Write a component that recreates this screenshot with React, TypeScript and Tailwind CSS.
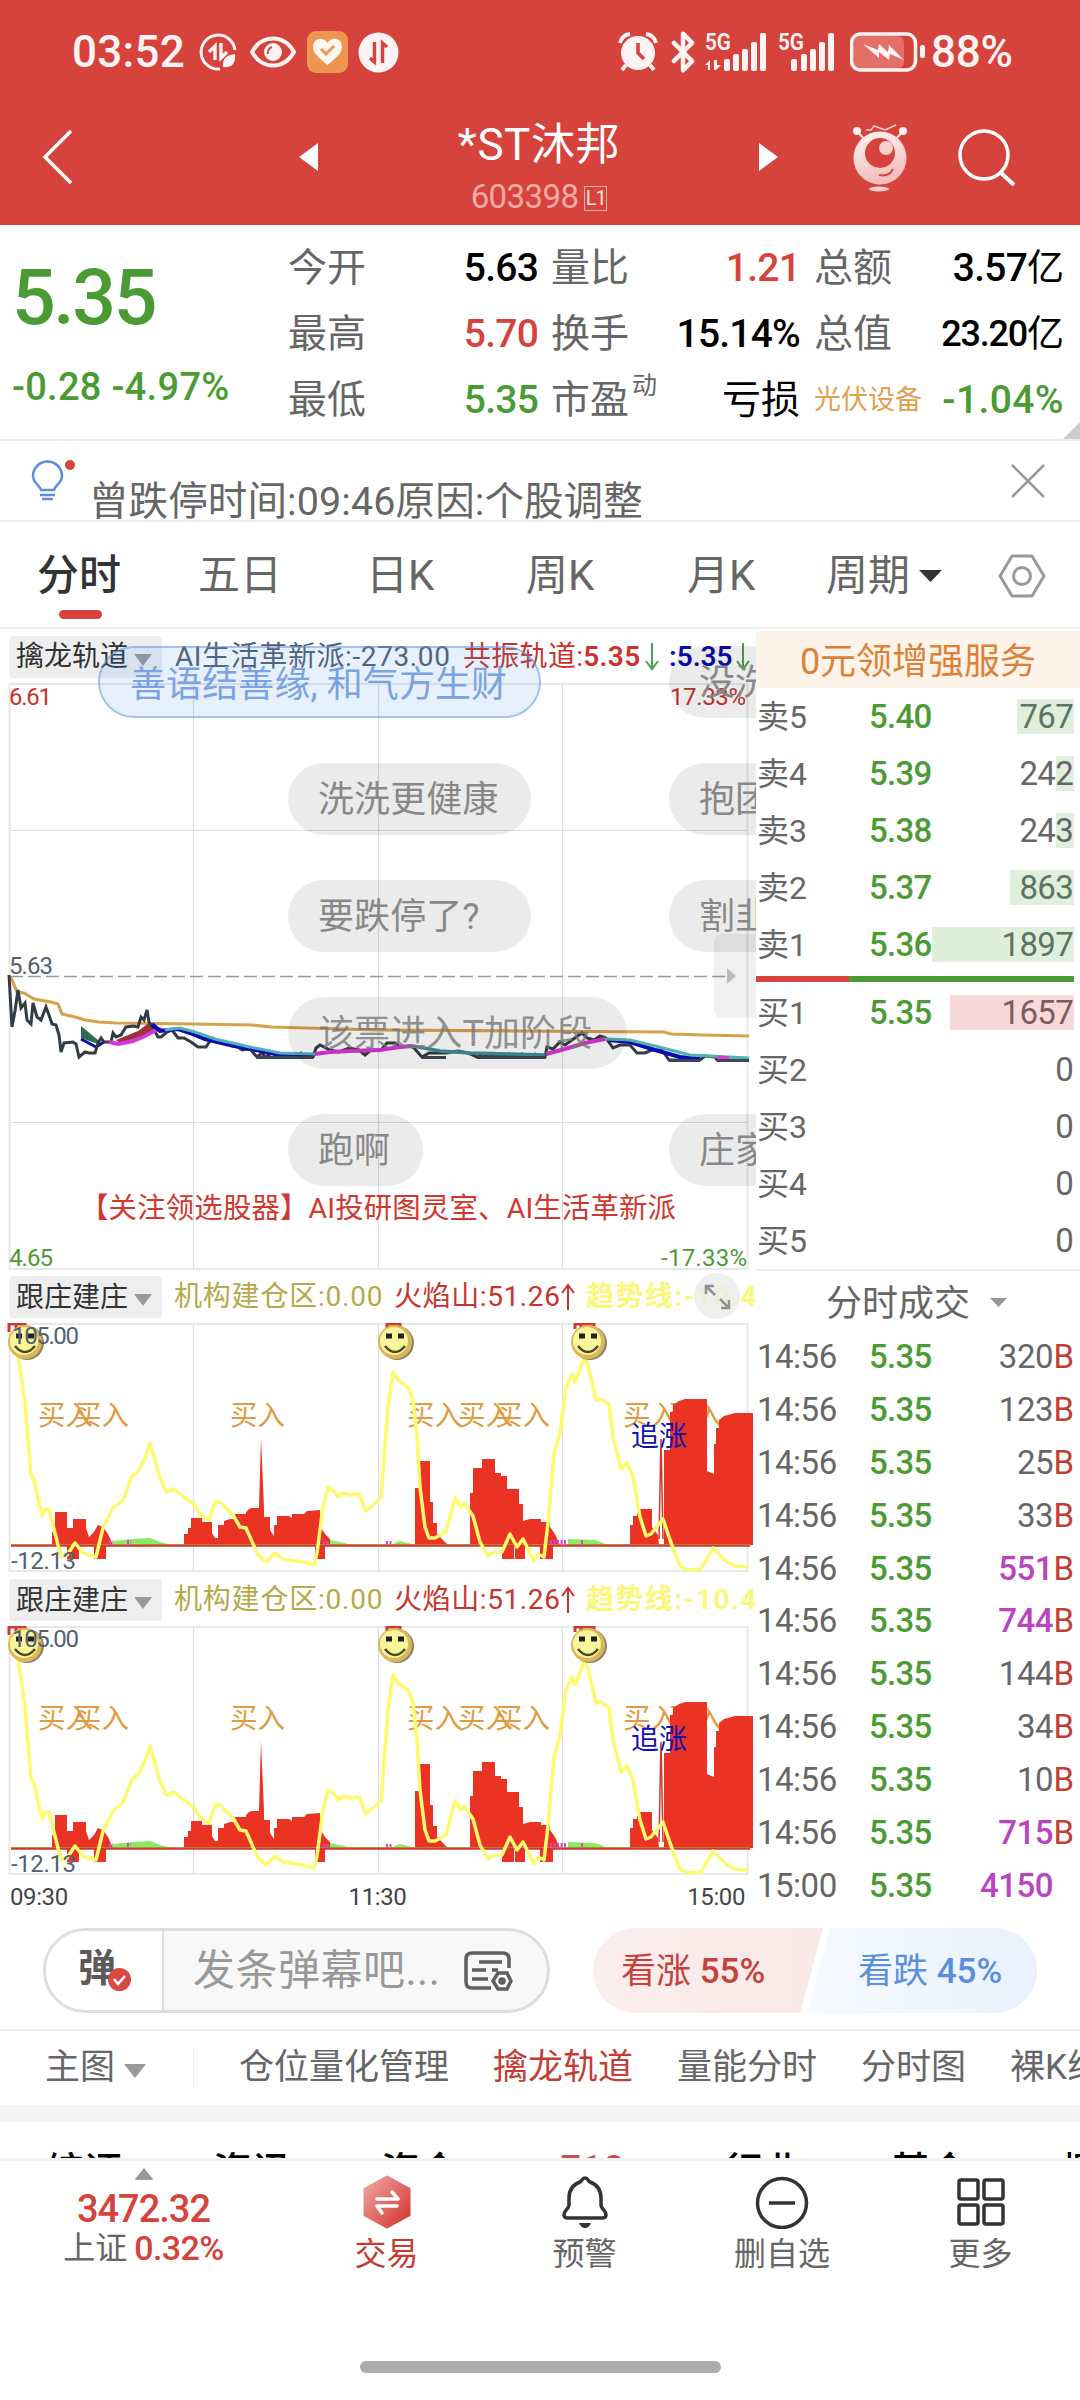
import React from 'react'
import { Bluetooth } from 'lucide-react'

const quoteRows = [
  [
    { label: '今开', value: '5.63', color: 'text-black' },
    { label: '量比', value: '1.21', color: 'text-[#d5433c]' },
    { label: '总额', value: '3.57', unit: '亿', color: 'text-black' }
  ],
  [
    { label: '最高', value: '5.70', color: 'text-[#d5433c]' },
    { label: '换手', value: '15.14%', color: 'text-black' },
    { label: '总值', value: '23.20', unit: '亿', color: 'text-black' }
  ],
  [
    { label: '最低', value: '5.35', color: 'text-[#4b9b35]' },
    { label: '市盈', sup: '动', value: '', unit: '亏损', color: 'text-black' },
    { label: '光伏设备', value: '-1.04%', color: 'text-[#4b9b35]' }
  ]
]

const sells = [
  { name: '卖5', price: '5.40', qty: '767', bar: 57 },
  { name: '卖4', price: '5.39', qty: '242', bar: 18 },
  { name: '卖3', price: '5.38', qty: '243', bar: 18 },
  { name: '卖2', price: '5.37', qty: '863', bar: 64 },
  { name: '卖1', price: '5.36', qty: '1897', bar: 142 }
]

const buys = [
  { name: '买1', price: '5.35', qty: '1657', bar: 124 },
  { name: '买2', price: '', qty: '0', bar: 0 },
  { name: '买3', price: '', qty: '0', bar: 0 },
  { name: '买4', price: '', qty: '0', bar: 0 },
  { name: '买5', price: '', qty: '0', bar: 0 }
]

const trades = [
  { time: '14:56', qty: '320', side: 'B' },
  { time: '14:56', qty: '123', side: 'B' },
  { time: '14:56', qty: '25', side: 'B' },
  { time: '14:56', qty: '33', side: 'B' },
  { time: '14:56', qty: '551', side: 'B' },
  { time: '14:56', qty: '744', side: 'B' },
  { time: '14:56', qty: '144', side: 'B' },
  { time: '14:56', qty: '34', side: 'B' },
  { time: '14:56', qty: '10', side: 'B' },
  { time: '14:56', qty: '715', side: 'B' },
  { time: '15:00', qty: '4150', side: '' }
]

// 分时价格线
const pricePoints =
  '9,292 12,344 15,328 18,307 21,325 25,320 27,337 31,341 33,320 37,334 41,337 46,324 50,335 52,341 56,342 59,352 61,369 64,360 73,359 76,361 79,374 85,369 89,370 95,370 98,360 101,355 104,359 111,359 113,350 116,354 121,352 126,344 133,343 138,344 141,334 144,337 147,327 149,339 153,345 158,354 161,354 167,349 172,347 178,355 184,355 191,359 198,364 206,364 212,355 218,359 225,359 232,363 238,364 242,367 250,366 257,374 262,370 265,374 272,370 279,374 286,372 293,374 301,370 305,374 313,374 316,365 320,362 330,367 339,369 349,365 359,367 365,372 371,367 381,367 387,360 395,360 400,364 410,363 414,365 422,374 429,370 446,370 458,368 468,370 477,374 483,371 490,374 496,371 503,374 509,371 516,374 522,371 529,374 535,371 545,374 547,364 553,366 560,359 565,362 572,357 582,350 587,355 594,357 600,353 606,355 613,365 620,362 630,362 637,370 645,370 652,367 662,367 669,377 700,377 705,373 715,374 717,377 749,377'

const avgPoints =
  '10,294 12,297 17,309 24,310 34,316 51,319 58,321 62,331 75,334 85,337 99,339 116,340 194,341 252,342 271,344 378,347 514,348 664,349 671,351 703,352 749,353'

const trendPoints =
  '18,32 25,80 31,152 34,157 42,193 45,186 49,186 53,202 61,234 67,232 75,220 83,230 96,234 103,205 113,185 123,177 132,153 138,149 145,135 150,120 153,130 160,155 166,169 174,166 185,175 193,180 200,192 209,197 215,179 220,179 233,192 240,204 246,205 258,232 266,239 275,230 283,236 303,239 314,242 317,230 323,184 328,164 335,169 338,174 344,170 350,172 359,171 366,188 381,175 388,84 393,49 398,57 408,64 413,77 417,114 420,164 425,204 429,215 435,215 446,209 455,175 461,184 464,180 473,193 480,219 488,233 492,230 502,229 510,211 517,224 523,216 534,238 538,231 544,234 548,200 554,130 560,110 566,64 572,51 575,59 584,36 587,38 596,77 600,76 609,81 613,114 621,146 627,140 633,154 640,194 646,213 651,211 663,196 670,217 680,243 688,247 701,246 713,225 727,239 735,243 748,244'

const flames = [
  '52,222 52,209 55,209 55,189 67,189 67,205 73,205 73,196 86,196 86,205 89,214 94,209 98,202 103,204 108,211 113,222',
  '184,222 184,211 188,211 188,205 191,205 191,195 202,195 202,199 212,199 212,210 215,215 218,215 218,202 224,202 224,198 230,196 235,196 235,191 246,191 246,189 249,186 252,185 259,185 261,115 264,185 264,194 270,194 270,207 274,213 274,202 277,202 277,193 289,193 292,195 292,191 304,191 307,188 320,187 320,203 325,211 330,216 331,222',
  '415,222 415,165 419,165 419,138 430,138 430,179 433,179 433,200 437,200 437,211 442,216 448,222',
  '470,222 470,170 473,170 473,145 482,145 482,136 495,136 495,150 501,150 501,153 507,153 507,166 519,166 519,181 523,181 523,198 530,196 541,196 541,199 550,199 550,204 555,211 560,222',
  '630,222 630,202 633,202 633,193 637,193 637,190 640,190 640,186 652,186 652,204 658,212 659,222',
  '664,222 664,127 670,127 670,89 673,89 673,82 679,78 685,76 707,76 707,148 714,151 714,121 716,121 716,105 719,105 719,97 724,93 735,90 753,90 753,222'
]

const buyMarks = [38, 74, 230, 407, 458, 495, 623, 668]

function StatusBar() {
  return (
    <div className="h-[104px] shrink-0 flex items-center justify-between pl-[72px] pr-[65px] text-[#fff3f3]">
      <div className="flex items-center">
        <span className="w-[126px] text-[44px] font-medium leading-none tracking-[0.3px]">03:52</span>
        <svg className="w-[40px] h-[40px]" viewBox="0 0 40 40" fill="none" stroke="currentColor" strokeWidth="3">
          <path d="M37 18A17 17 0 1 0 22 37" />
          <path d="M11 20L17 14V28M23 11V26L29 20" strokeWidth="3.4" />
          <path d="M25 35C24 27 28 23 37 22C38 31 34 36 25 35Z" fill="currentColor" stroke="none" />
        </svg>
        <svg className="ml-[12px] w-[46px] h-[40px]" viewBox="0 0 46 40" fill="none" stroke="currentColor" strokeWidth="4">
          <path d="M2 20C12 2 34 2 44 20C34 38 12 38 2 20Z" />
          <circle cx="23" cy="20" r="9" fill="currentColor" stroke="none" />
          <path d="M18 22A6 6 0 0 1 22 15" stroke="#d5433c" strokeWidth="2" />
        </svg>
        <svg className="ml-[11px] w-[41px] h-[42px]" viewBox="0 0 41 42">
          <rect width="41" height="42" rx="9" fill="#ec9652" />
          <path d="M20.500 34C11 26 6 22 6 16C6 7 16 5 20.500 12C25 5 35 7 35 16C35 22 30 26 20.500 34Z" fill="#fff6ee" />
          <path d="M14 18L19 23L27 15" stroke="#ec9652" strokeWidth="3" fill="none" />
        </svg>
        <svg className="ml-[10px] w-[41px] h-[41px]" viewBox="0 0 41 41">
          <circle cx="20.500" cy="20.500" r="20" fill="currentColor" />
          <path d="M16.500 10V30L12 26M24.500 31V11L29 15" stroke="#d5433c" strokeWidth="3.400" fill="none" />
        </svg>
      </div>
      <div className="flex items-center">
        <svg className="w-[40px] h-[40px]" viewBox="0 0 40 40">
          <circle cx="20" cy="21" r="17" fill="currentColor" />
          <path d="M2 11Q4 3 12 2M38 11Q36 3 28 2M8 33L4 38M32 33L36 38" stroke="currentColor" strokeWidth="4" fill="none" />
          <path d="M20 11V21L26 27" stroke="#d5433c" strokeWidth="3.500" fill="none" />
        </svg>
        <Bluetooth className="ml-[3px] w-[44px] h-[44px]" strokeWidth={2.4} />
        <svg className="w-[64px] h-[40px] overflow-visible" viewBox="0 0 64 40" fill="currentColor">
          <text x="0" y="18" fontSize="23" fontWeight="600" textLength="26" lengthAdjust="spacingAndGlyphs">5G</text>
          <path d="M0 33L5 28V38H3V33ZM9 28H12V33L16 33L11 38H9Z" />
          <rect x="19" y="27" width="6" height="12" rx="2" />
          <rect x="28" y="22" width="6" height="17" rx="2" />
          <rect x="37" y="17" width="6" height="22" rx="2" />
          <rect x="46" y="10" width="6" height="29" rx="2" />
          <rect x="55" y="1" width="6" height="38" rx="2" />
        </svg>
        <svg className="ml-[9px] w-[60px] h-[40px] overflow-visible" viewBox="0 0 60 40" fill="currentColor">
          <text x="0" y="18" fontSize="23" fontWeight="600" textLength="26" lengthAdjust="spacingAndGlyphs">5G</text>
          <rect x="13" y="27" width="6" height="12" rx="2" />
          <rect x="23" y="22" width="6" height="17" rx="2" />
          <rect x="32" y="17" width="6" height="22" rx="2" />
          <rect x="41" y="10" width="6" height="29" rx="2" />
          <rect x="50" y="1" width="6" height="38" rx="2" />
        </svg>
        <svg className="ml-[12px] w-[76px] h-[40px]" viewBox="0 0 76 40" fill="none">
          <rect x="3" y="4" width="51" height="33" rx="7" fill="#e27068" />
          <rect x="1.500" y="2" width="64" height="36" rx="9" stroke="currentColor" strokeWidth="3.500" />
          <path d="M13 12L29 26L29 20L39 28L40 22L54 28L39 13L38 20L29 12L28 18Z" fill="currentColor" />
          <rect x="70" y="13" width="5" height="13" rx="2" fill="currentColor" />
        </svg>
        <span className="ml-[5px] w-[84px] text-[44px] font-medium leading-none tracking-[-0.2px]">88%</span>
      </div>
    </div>
  )
}

function TitleBar() {
  return (
    <div className="h-[121px] shrink-0 flex pl-[42px] pr-[63px] text-white">
      <svg className="mt-[25px] w-[32px] h-[56px]" viewBox="0 0 32 56" fill="none" stroke="white" strokeWidth="3.500">
        <path d="M29 2L3 28L29 54" />
      </svg>
      <svg className="mt-[39px] ml-[225px] w-[19px] h-[28px]" viewBox="0 0 19 28" fill="white">
        <path d="M0 14L19 0V28Z" />
      </svg>
      <div className="ml-[100px] w-[242px] flex flex-col items-center">
        <div className="mt-[18px] text-[44px] leading-[46px] tracking-[0.6px] whitespace-nowrap">*ST沐邦</div>
        <div className="mt-[13px] flex items-center gap-[6px] text-[#f4aaa6]">
          <span className="text-[33px] leading-[32px] tracking-[-0.6px]">603398</span>
          <span className="mt-[3px] w-[23px] h-[25px] border border-[#f4aaa6] text-[20px] leading-[23px] text-center text-[#fce0de] tracking-[-1px]">L1</span>
        </div>
      </div>
      <svg className="mt-[39px] ml-[99px] w-[19px] h-[28px]" viewBox="0 0 19 28" fill="white">
        <path d="M19 14L0 0V28Z" />
      </svg>
      <svg className="mt-[20px] ml-[74px] w-[56px] h-[68px]" viewBox="0 0 56 68">
        <defs>
          <linearGradient id="mascot" x1="0" y1="0" x2="0.3" y2="1">
            <stop offset="0" stopColor="#fff6f5" />
            <stop offset="1" stopColor="#f3bdbb" />
          </linearGradient>
        </defs>
        <path d="M14 6L19 6L22 2L33 6L44 1" stroke="#f9d0ce" strokeWidth="1.500" fill="none" />
        <path d="M5 7L12 15M51 7L44 15" stroke="#fbe3e2" strokeWidth="2" />
        <circle cx="5" cy="7" r="4" fill="#fff0ef" />
        <circle cx="51" cy="7" r="4" fill="#fff0ef" />
        <circle cx="28" cy="34" r="26.500" fill="url(#mascot)" />
        <circle cx="28" cy="29" r="15" fill="#d5433c" />
        <circle cx="34" cy="24" r="7" fill="#f8cfcd" />
        <path d="M27 51Q37 53 41 45" stroke="#d5433c" strokeWidth="2" fill="none" />
        <ellipse cx="27" cy="65" rx="10" ry="2.500" fill="#f8cfcd" />
      </svg>
      <svg className="mt-[24px] ml-[50px] w-[58px] h-[58px]" viewBox="0 0 58 58" fill="none" stroke="white" strokeWidth="3.500">
        <circle cx="26" cy="27" r="24" />
        <path d="M42 44L56 57" strokeWidth="4" />
      </svg>
    </div>
  )
}

function Quote() {
  return (
    <div className="relative h-[216px] shrink-0 flex border-b-2 border-[#eeeeee]">
      <div className="w-[288px] pl-[12px] text-[#4b9b35]">
        <div className="mt-[33px] text-[77px] leading-[80px] font-medium tracking-[-2.4px]">5.35</div>
        <div className="mt-[29px] text-[38px] leading-[40px] font-medium tracking-[0.3px] whitespace-nowrap">-0.28 -4.97%</div>
      </div>
      <div className="flex flex-col pt-[10px]">
        {quoteRows.map((row, i) => (
          <div key={i} className="flex h-[66px] items-center leading-none text-[39px]">
            {row.map((cell, j) => (
              <div key={j} className={`flex items-center justify-between whitespace-nowrap ${j === 0 ? 'w-[250px] mr-[13px]' : j === 1 ? 'w-[249px] mr-[14px]' : 'w-[250px]'}`}>
                {cell.label === '光伏设备' ? (
                  <span className="text-[27px] text-[#e39f50]">{cell.label}</span>
                ) : (
                  <span className="flex text-[#666666]">
                    {cell.label}
                    {cell.sup && <span className="-mt-[8px] ml-[3px] text-[25px]">{cell.sup}</span>}
                  </span>
                )}
                <span className={`flex items-center ${cell.color}`}>
                  <span className={`font-medium ${cell.value === '23.20' ? 'text-[36px] tracking-[-1.2px]' : cell.value === '-1.04%' ? 'tracking-[0.4px]' : 'tracking-[-0.8px]'}`}>
                    {cell.value}
                  </span>
                  {cell.unit && <span className={i === 2 ? '' : 'text-[37px]'}>{cell.unit}</span>}
                </span>
              </div>
            ))}
          </div>
        ))}
      </div>
      <svg className="absolute right-0 bottom-0 w-[17px] h-[17px]" viewBox="0 0 17 17">
        <path d="M17 0V17H0Z" fill="#cccccc" />
      </svg>
    </div>
  )
}

function Hint() {
  return (
    <div className="h-[81px] shrink-0 flex overflow-hidden border-b-2 border-[#eeeeee] pl-[31px] pr-[34px]">
      <svg className="mt-[18px] w-[46px] h-[42px]" viewBox="0 0 46 42" fill="none" stroke="#5b8fdd" strokeWidth="2.500">
        <path d="M10 31C9 26 2 24 2 17A14.500 14.500 0 0 1 31 17C31 24 24 26 23 31Z" />
        <path d="M9 36H24M11 40H22" />
        <circle cx="39" cy="6" r="5" fill="#d5433c" stroke="none" />
      </svg>
      <div className="ml-[12px] mt-[41px] text-[39.500px] leading-[40px] text-[#666666] tracking-[0.1px] whitespace-nowrap">曾跌停时间:09:46原因:个股调整</div>
      <svg className="ml-auto mt-[22px] w-[36px] h-[36px]" viewBox="0 0 36 36" stroke="#999999" strokeWidth="2.500">
        <path d="M2 2L34 34M34 2L2 34" />
      </svg>
    </div>
  )
}

function PeriodTabs() {
  return (
    <div className="h-[107px] shrink-0 flex border-b-2 border-[#eeeeee] pl-[37px] text-[42px] leading-none text-[#666666]">
      <div className="w-[161px]">
        <div className="mt-[33px] font-medium text-[#333333]">分时</div>
        <div className="mt-[13px] ml-[22px] w-[43px] h-[9px] rounded-full bg-[#d5433c]" />
      </div>
      <div className="mt-[33px] w-[168px]">五日</div>
      <div className="mt-[33px] w-[160px]">日K</div>
      <div className="mt-[33px] w-[161px]">周K</div>
      <div className="mt-[33px] w-[139px]">月K</div>
      <div className="mt-[33px] w-[93px]">周期</div>
      <svg className="mt-[48px] w-[23px] h-[12px]" viewBox="0 0 23 12" fill="#333333">
        <path d="M0 0H23L11.500 12Z" />
      </svg>
      <svg className="mt-[32px] ml-[56px] w-[48px] h-[44px]" viewBox="0 0 48 44" fill="none" stroke="#999999" strokeWidth="3">
        <path d="M14 2H34L46 22L34 42H14L2 22Z" strokeLinejoin="round" />
        <circle cx="24" cy="22" r="8.500" />
      </svg>
    </div>
  )
}

function Caret({ className = '' }: { className?: string }) {
  return (
    <svg className={className} viewBox="0 0 18 12" preserveAspectRatio="none" fill="#999999">
      <path d="M0 0H18L9 12Z" />
    </svg>
  )
}

function Bubble({ className, children }: { className: string; children: React.ReactNode }) {
  return (
    <div className={`absolute h-[72px] rounded-full pl-[30px] text-[36px] leading-[75px] tracking-[0.1px] whitespace-nowrap ${className}`}>
      {children}
    </div>
  )
}

function MainChart() {
  return (
    <div className="relative h-[642px] overflow-hidden">
      <div className="h-[55px] flex items-center pl-[9px] text-[28px] leading-none whitespace-nowrap">
        <div className="w-[153px] h-[42px] shrink-0 rounded bg-[#eeeeee] flex items-center pl-[7px] text-[#333333]">
          擒龙轨道
          <Caret className="ml-[6px] mt-[6px] w-[18px] h-[12px]" />
        </div>
        <span className="ml-[13px] w-[288px] shrink-0 text-[#556070] tracking-[0.6px]">AI生活革新派:-273.00</span>
        <span className="w-[181px] shrink-0 text-[#c8342b] tracking-[0.3px]">
          共振轨道:<span className="font-semibold">5.35</span>
        </span>
        <svg className="w-[16px] h-[30px] shrink-0" viewBox="0 0 16 30" fill="none" stroke="#4f9f50" strokeWidth="2">
          <path d="M8 1V27M2 19L8 27L14 19" />
        </svg>
        <span className="ml-[9px] w-[66px] shrink-0 text-[#0d0db0] font-semibold">:5.35</span>
        <svg className="w-[16px] h-[30px] shrink-0" viewBox="0 0 16 30" fill="none" stroke="#4f9f50" strokeWidth="2">
          <path d="M8 1V27M2 19L8 27L14 19" />
        </svg>
      </div>
      <svg className="-mt-px w-[756px] h-[588px]" viewBox="0 0 756 588" fill="none">
        <path d="M193.500 0V586M378.500 0V586M562.500 0V586M9 147.500H747M9 439.500H747" stroke="#dddddd" strokeWidth="1.200" />
        <rect x="9.500" y="1" width="738" height="585" stroke="#e8e8e8" strokeWidth="2" />
        <path d="M10 293.500H727" stroke="#999999" strokeWidth="1.500" strokeDasharray="13 5" />
        <polyline points={avgPoints} stroke="#d6a24c" strokeWidth="3.200" />
        <polygon points="81,343 98,357 98,361 81,355" fill="#2f6d4d" />
        <polyline points="81,356 96,364 104,359" stroke="#0b0bb4" strokeWidth="3" />
        <polygon points="116,357 138,348 150,339 156,346 140,354 120,361" fill="#9b3338" />
        <polyline points={pricePoints} stroke="#333b44" strokeWidth="3" />
        <polyline points="109,359 118,361 133,358 145,353 158,346 162,347" stroke="#d636d6" strokeWidth="4" />
        <polyline points="152,341 160,348 178,346 190,350 205,356 230,362 256,367 275,371 312,373" stroke="#0b0bb4" strokeWidth="4" />
        <polyline points="165,347 180,345 195,349 215,356 250,364 280,370 315,371" stroke="#4fb3b5" strokeWidth="3" />
        <polyline points="315,371 330,369 350,368 380,367 400,364 413,363" stroke="#d636d6" strokeWidth="4" />
        <polyline points="413,363 440,368 470,370 545,372" stroke="#3e8f98" strokeWidth="3.500" />
        <polyline points="546,371 565,366 585,360 605,356" stroke="#d636d6" strokeWidth="4" />
        <polyline points="608,357 630,359 655,367 680,374 700,376" stroke="#0b0bb4" strokeWidth="4" />
        <polyline points="605,356 630,357 655,363 690,372 710,373 749,375" stroke="#4fb3b5" strokeWidth="3" />
        <path d="M717 374L729 375" stroke="#d636d6" strokeWidth="3" />
        <path d="M422 374.500H446M477 374.500H545M669 377.500H700M717 377.500H749M257 374.500H313" stroke="#3c4652" strokeWidth="3" />
        <g fontSize="24">
          <text x="9" y="22" fill="#c8342b" textLength="43">6.61</text>
          <text x="670" y="22" fill="#c8342b" textLength="76">17.33%</text>
          <text x="9" y="291" fill="#556070" textLength="44">5.63</text>
          <text x="9" y="583" fill="#4b9b35" textLength="44">4.65</text>
          <text x="661" y="583" fill="#4b9b35" textLength="86">-17.33%</text>
        </g>
        <text x="80" y="535" fontSize="28.400" fill="#d1382d" textLength="596">【关注领选股器】AI投研图灵室、AI生活革新派</text>
      </svg>
      {/* 弹幕 */}
      <Bubble className="left-[98px] top-[17px] w-[443px] border-2 border-[#5b93e080] bg-[#3f86f020] text-[#7ba2e2]">
        善语结善缘, 和气方生财
      </Bubble>
      <Bubble className="left-[669px] top-[17px] w-[240px] bg-black/8 text-[#888888]">没洗</Bubble>
      <Bubble className="left-[288px] top-[134px] w-[243px] bg-black/8 text-[#888888]">洗洗更健康</Bubble>
      <Bubble className="left-[669px] top-[134px] w-[240px] bg-black/8 text-[#888888]">抱团</Bubble>
      <Bubble className="left-[288px] top-[251px] w-[243px] bg-black/8 text-[#888888]">要跌停了?</Bubble>
      <Bubble className="left-[669px] top-[251px] w-[240px] bg-black/8 text-[#888888]">割韭</Bubble>
      <Bubble className="left-[288px] top-[368px] w-[339px] bg-black/8 text-[#777777cc]">该票进入T加阶段</Bubble>
      <Bubble className="left-[288px] top-[485px] w-[135px] bg-black/8 text-[#888888]">跑啊</Bubble>
      <Bubble className="left-[669px] top-[485px] w-[240px] bg-black/8 text-[#888888]">庄家</Bubble>
      <div className="absolute left-[714px] top-[305px] w-[42px] h-[84px] rounded-l-lg bg-black/6 flex items-center pl-[13px]">
        <svg className="w-[9px] h-[16px]" viewBox="0 0 9 16" fill="#bbbbbb">
          <path d="M0 0L9 8L0 16Z" />
        </svg>
      </div>
    </div>
  )
}

function Smiley({ x, y }: { x: number; y: number }) {
  return (
    <g>
      <circle cx={x + 2} cy={y + 1} r="17" fill="#8f8468" />
      <circle cx={x} cy={y} r="17" fill="#dcb65a" />
      <circle cx={x - 1} cy={y - 1} r="14" fill="#f8f59a" />
      <path d={`M${x - 9} ${y - 6}h6M${x + 3} ${y - 6}h6`} stroke="#222222" strokeWidth="5" />
      <path d={`M${x - 10} ${y + 4}q10 12 20 0`} stroke="#4a4a20" strokeWidth="2.500" fill="none" />
    </g>
  )
}

function FlameChart({ expandable }: { expandable?: boolean }) {
  return (
    <div className="relative h-[303px] overflow-hidden">
      <div className="h-[52px] pt-[5px] flex items-start pl-[9px] text-[28px] leading-[41px] whitespace-nowrap">
        <div className="w-[153px] h-[42px] shrink-0 rounded bg-[#eeeeee] flex items-center pl-[7px] text-[#333333]">
          跟庄建庄
          <Caret className="ml-[6px] mt-[6px] w-[18px] h-[12px]" />
        </div>
        <span className="ml-[12px] w-[220px] shrink-0 text-[#b5a948] tracking-[0.8px]">机构建仓区:0.00</span>
        <span className="w-[167px] shrink-0 text-[#c8342b] tracking-[0.6px]">火焰山:51.26</span>
        <svg className="mt-[7px] w-[14px] h-[28px] shrink-0" viewBox="0 0 14 28" fill="none" stroke="#c8342b" strokeWidth="2">
          <path d="M7 27V2M1 10L7 2L13 10" />
        </svg>
        <span className="ml-[11px] shrink-0 text-[#fbf77b] font-bold tracking-[1.4px]">趋势线:-10.43</span>
      </div>
      <svg className="w-[756px] h-[251px]" viewBox="0 0 756 251" fill="none">
        <path d="M193.500 0V248M378.500 0V248M562.500 0V248" stroke="#dddddd" strokeWidth="1.200" />
        <rect x="9.500" y="1" width="738" height="247" stroke="#e8e8e8" strokeWidth="2" />
        {buyMarks.map((x) => (
          <text key={x} x={x} y="102" fontSize="27.500" fill="#e09a40">买入</text>
        ))}
        {flames.map((points, i) => (
          <polygon key={i} points={points} fill="#ea3323" />
        ))}
        <path d="M67 222H79V236H67ZM94 222H106V236H94ZM315 222H325V236H315ZM502 222H514V236H502ZM515 222H525V236H515ZM540 222H553V236H540Z" fill="#ea3323" />
        <path d="M659 216L661 116L663 216" stroke="#d0382b" strokeWidth="1.500" />
        <path d="M113 221V218L133 216L150 215L160 219L172 222ZM330 222V217L345 220L350 222ZM390 222L400 218L412 221ZM568 222V216L595 217L608 222Z" fill="#86ec62" />
        <path d="M109 219H113M127 219H131M323 220H330M386 220H392M550 219H567M581 219H583" stroke="#e63be0" strokeWidth="4" strokeDasharray="2 1.500" />
        <path d="M11 222.500H750" stroke="#d3362b" strokeWidth="2.500" />
        <path d="M11 221.500H750" stroke="#a8a03a" strokeWidth="0.700" />
        <polyline points={trendPoints} stroke="#fdfa70" strokeWidth="3.500" strokeLinejoin="round" />
        <path d="M9 9V1H25V5M16 9V1M387 6V1H400V5M575 6V1H594V5M581 5V1M587 5V1" stroke="#d3362b" strokeWidth="3" />
        <Smiley x={25} y={19} />
        <Smiley x={395} y={19} />
        <Smiley x={588} y={19} />
        <text x="631" y="123" fontSize="28" fill="#1111b5">追涨</text>
        <g fontSize="24" fill="#556070">
          <text x="12" y="21" textLength="67">105.00</text>
          <text x="11" y="246" textLength="65">-12.13</text>
        </g>
      </svg>
      {expandable && (
        <svg className="absolute left-[694px] top-[2px] w-[46px] h-[46px]" viewBox="0 0 46 46" fill="none">
          <circle cx="23" cy="23" r="23" fill="#e9e9e9" fillOpacity="0.75" />
          <path d="M12 21V13H20M12 13L21 22M35 27V35H27M35 35L26 26" stroke="#909090" strokeWidth="2.500" />
        </svg>
      )}
    </div>
  )
}

function BookRow({ row, green }: { row: (typeof sells)[number]; green?: boolean }) {
  return (
    <div className="relative h-[57px] flex items-center pr-[7px] text-[33px] leading-none text-[#666666]">
      <div
        className={`absolute right-[6px] h-[35px] ${green ? 'bg-[#deefdc]' : 'bg-[#f7d9d9]'}`}
        style={{ width: row.bar }}
      />
      <span className="w-[113px] pl-px text-[32px]">{row.name}</span>
      <span className="text-[#4b9b35] font-medium tracking-[-0.7px]">{row.price}</span>
      <span className={`relative ml-auto tracking-[-0.7px] ${row.bar > 50 ? (green ? 'text-[#5f7360]' : 'text-[#7c5c5c]') : ''}`}>{row.qty}</span>
    </div>
  )
}

function SidePanel() {
  return (
    <div className="w-[324px] flex flex-col">
      <div className="mt-[2px] h-[57px] bg-[#fef3e9] text-center text-[36px] leading-[62px] text-[#dc8238]">
        0元领增强服务
      </div>
      <div>
        {sells.map((row) => (
          <BookRow key={row.name} row={row} green />
        ))}
      </div>
      <div className="mt-[3px] mb-[2px] mr-[6px] h-[6px] flex">
        <div className="w-[93px] bg-[#d5433c]" />
        <div className="flex-1 bg-[#4b9b35]" />
      </div>
      <div className="h-[287px] border-b-2 border-[#eeeeee]">
        {buys.map((row) => (
          <BookRow key={row.name} row={row} />
        ))}
      </div>
      <div className="h-[59px] flex items-center pl-[70px] pt-[6px] text-[36px] leading-none text-[#666666]">
        分时成交
        <Caret className="ml-[20px] -mt-[2px] w-[17px] h-[9px]" />
      </div>
      {trades.map((t, i) => (
        <div key={i} className="h-[52.9px] flex items-center pl-px pr-[6px] text-[33px] leading-none text-[#666666]">
          <span className="w-[112px] tracking-[-0.5px]">{t.time}</span>
          <span className="text-[#4b9b35] font-medium tracking-[-0.7px]">5.35</span>
          <span className={`ml-auto tracking-[-0.5px] ${Number(t.qty) > 500 ? 'text-[#b944bd] font-medium' : ''}`}>{t.qty}</span>
          <span className="w-[21px] text-right text-[#c23d33]">{t.side}</span>
        </div>
      ))}
    </div>
  )
}

function BarrageBar() {
  return (
    <div className="h-[117px] shrink-0 flex pt-[16px] pl-[43px]">
      <div className="w-[507px] h-[85px] shrink-0 rounded-full border-[3px] border-[#dddddd] bg-[#f8f8f8] overflow-hidden flex items-center">
        <div className="relative w-[118px] h-full shrink-0 border-r-2 border-[#dddddd] bg-white pl-[32px] text-[38px] leading-[74px] font-bold text-[#5a5a5a]">
          弹
          <svg className="absolute left-[62px] top-[37px] w-[23px] h-[23px]" viewBox="0 0 23 23" fill="none">
            <circle cx="11.500" cy="11.500" r="11.500" fill="#d94a43" />
            <path d="M6 11L10 16L17 8" stroke="white" strokeWidth="2.500" />
          </svg>
        </div>
        <span className="ml-[29px] w-[271px] text-[42px] leading-none text-[#999999] tracking-[0.5px] whitespace-nowrap">发条弹幕吧...</span>
        <svg className="w-[50px] h-[42px]" viewBox="0 0 50 42" fill="none" stroke="#5f5f5f" strokeWidth="3.500">
          <path d="M27 38H8Q2 38 2 32V9Q2 3 8 3H38Q45 3 45 9V18" />
          <path d="M15 12H38M8 20H22M28 20H34M8 29H24" />
          <path d="M34 23H43L47 31L43 39H34L29 31Z" />
          <circle cx="38" cy="31" r="2" />
        </svg>
      </div>
      <div className="ml-[43px] flex h-[85px] text-[35px] leading-[88px] whitespace-nowrap">
        <div className="w-[230px] rounded-l-full bg-linear-to-r from-[#fbeeee] to-[#f9e8e7] [clip-path:polygon(0_0,100%_0,90%_100%,0_100%)] pl-[28px] text-[#c4423a]">
          看涨 <span className="font-medium">55%</span>
        </div>
        <div className="-ml-[16px] w-[230px] rounded-r-full bg-linear-to-r from-[#f6fafe] to-[#e8f1fd] [clip-path:polygon(10%_0,100%_0,100%_100%,0_100%)] pl-[51px] text-[#5a8fdc]">
          看跌 <span className="font-medium">45%</span>
        </div>
      </div>
    </div>
  )
}

function IndicatorTabs() {
  return (
    <div className="h-[76px] shrink-0 flex items-center border-t-2 border-[#eeeeee] pl-[45px] pb-[2px] text-[35px] leading-none text-[#666666] whitespace-nowrap overflow-hidden">
      <span className="w-[79px] shrink-0">主图</span>
      <Caret className="mt-[8px] w-[22px] h-[14px] shrink-0" />
      <div className="ml-[47px] mr-[45px] w-px h-[40px] shrink-0 bg-[#eeeeee]" />
      <span className="w-[254px] shrink-0">仓位量化管理</span>
      <span className="w-[184px] shrink-0 text-[#c43c34]">擒龙轨道</span>
      <span className="w-[184px] shrink-0">量能分时</span>
      <span className="w-[149px] shrink-0">分时图</span>
      <span className="shrink-0">裸K线</span>
    </div>
  )
}

function InfoTabs() {
  return (
    <div className="h-[39px] shrink-0 overflow-hidden border-b-[3px] border-[#f2f2f2] pt-[30px] pl-[45px] flex text-[39px] leading-[40px] text-black font-medium whitespace-nowrap">
      <span className="w-[168px] shrink-0">综评</span>
      <span className="w-[168px] shrink-0">资讯</span>
      <span className="w-[178px] shrink-0">资金</span>
      <span className="-mt-[2px] w-[165px] shrink-0 text-[#c4524a]">F10</span>
      <span className="w-[167px] shrink-0">行业</span>
      <span className="w-[171px] shrink-0">基金</span>
      <span className="shrink-0">概念</span>
    </div>
  )
}

function BottomNav() {
  return (
    <div className="h-[239px] shrink-0 flex flex-col">
      <div className="h-[120px] flex leading-none text-[32px] text-[#666666]">
        <div className="w-[287px] flex flex-col items-center">
          <svg className="mt-[7px] w-[18px] h-[12px]" viewBox="0 0 18 12" fill="#999999">
            <path d="M0 11L9 0L18 11Q17 12 16 12H2Q1 12 0 11Z" />
          </svg>
          <div className="mt-[10px] text-[38px] font-medium text-[#d5433c] tracking-[-1px]">3472.32</div>
          <div className="mt-[3px] flex items-center gap-[7px]">
            上证
            <span className="text-[34px] font-medium text-[#d5433c] tracking-[-0.6px]">0.32%</span>
          </div>
        </div>
        <div className="w-[199px] flex flex-col items-center text-[#c43c34]">
          <svg className="mt-[14px] w-[48px] h-[54px]" viewBox="0 0 48 54" fill="none">
            <defs>
              <linearGradient id="hex" x1="0" y1="0" x2="1" y2="1">
                <stop offset="0" stopColor="#eea8a5" />
                <stop offset="1" stopColor="#d3322b" />
              </linearGradient>
            </defs>
            <path d="M24 2L46 14V40L24 52L2 40V14Z" fill="url(#hex)" stroke="url(#hex)" strokeWidth="3" strokeLinejoin="round" />
            <path d="M14 24H35L29 17M34 31H14L19 38" stroke="white" strokeWidth="3.500" strokeLinecap="round" strokeLinejoin="round" />
          </svg>
          <div className="mt-[9px]">交易</div>
        </div>
        <div className="w-[197px] flex flex-col items-center">
          <svg className="mt-[14px] w-[48px] h-[54px]" viewBox="0 0 48 54" fill="none" stroke="#333333" strokeWidth="3.500">
            <path d="M24 3C21 3 21 6 19 7C11 10 8 15 8 23V30C8 34 3 35 3 40Q3 43 7 43H41Q45 43 45 40C45 35 40 34 40 30V23C40 15 37 10 29 7C27 6 27 3 24 3Z" />
            <path d="M18 48H30Q28 53 24 53Q20 53 18 48Z" fill="#333333" stroke="none" />
          </svg>
          <div className="mt-[9px]">预警</div>
        </div>
        <div className="w-[198px] flex flex-col items-center">
          <svg className="mt-[14px] w-[54px] h-[54px]" viewBox="0 0 54 54" fill="none" stroke="#333333" strokeWidth="3.500">
            <circle cx="27" cy="28" r="24.500" />
            <path d="M14 28H40" />
          </svg>
          <div className="mt-[9px]">删自选</div>
        </div>
        <div className="w-[199px] flex flex-col items-center">
          <svg className="mt-[14px] w-[50px] h-[54px]" viewBox="0 0 50 54" fill="none" stroke="#333333" strokeWidth="3.500">
            <rect x="3" y="5" width="19" height="19" rx="2" />
            <rect x="28" y="5" width="19" height="19" rx="2" />
            <rect x="3" y="30" width="19" height="19" rx="2" />
            <rect x="28" y="30" width="19" height="19" rx="2" />
          </svg>
          <div className="mt-[9px]">更多</div>
        </div>
      </div>
      <div className="mt-[80px] mx-auto w-[361px] h-[12px] rounded-full bg-[#acacac]" />
    </div>
  )
}

export default function App() {
  return (
    <div className="w-[1080px] h-[2400px] overflow-hidden bg-white flex flex-col font-[Roboto,'Noto_Sans_CJK_SC',sans-serif]">
      <div className="bg-[#d5433c]">
        <StatusBar />
        <TitleBar />
      </div>
      <Quote />
      <Hint />
      <PeriodTabs />
      <div className="h-[1283px] shrink-0 flex">
        <div className="w-[756px] overflow-hidden">
          <MainChart />
          <FlameChart expandable />
          <FlameChart />
          <div className="h-[32px] flex items-center justify-between pl-[10px] pr-[11px] pt-[8px] text-[24px] leading-none text-[#444444] tracking-[-0.4px]">
            <span>09:30</span>
            <span>11:30</span>
            <span>15:00</span>
          </div>
        </div>
        <SidePanel />
      </div>
      <BarrageBar />
      <IndicatorTabs />
      <div className="h-[17px] shrink-0 bg-[#f4f4f4]" />
      <InfoTabs />
      <BottomNav />
    </div>
  )
}
